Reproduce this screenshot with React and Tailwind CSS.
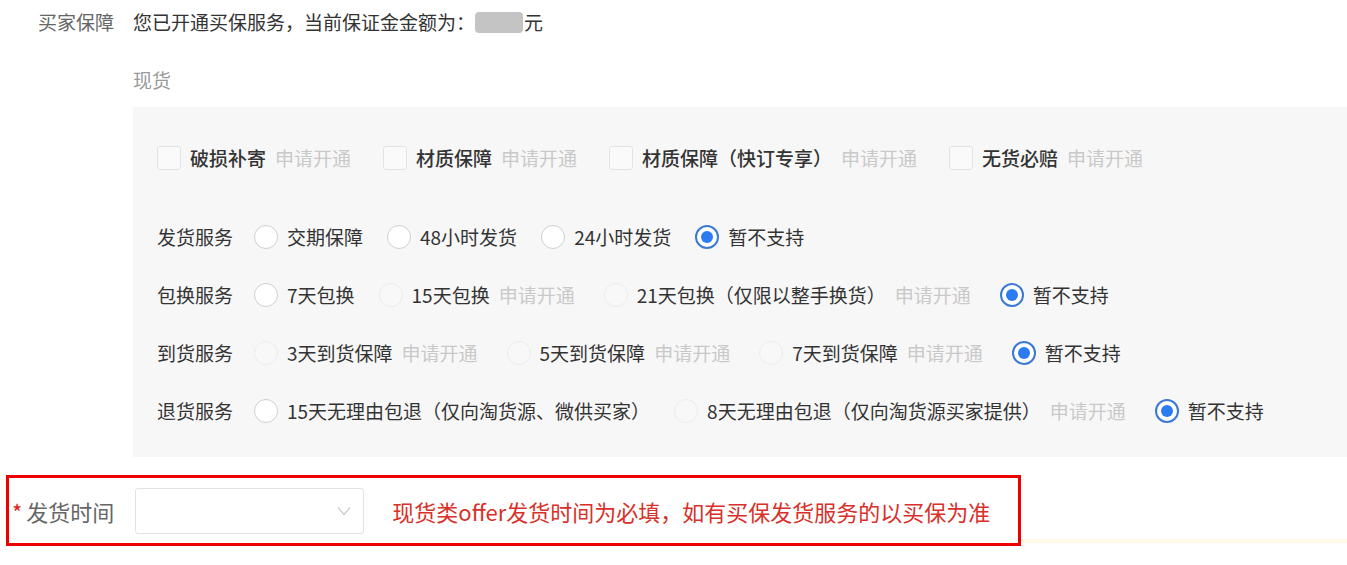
const FONT = { fontFamily: '"Noto Sans CJK SC", "Noto Sans", sans-serif' };

const deliveryRows = [
  {
    label: '发货服务',
    options: [
      { text: '交期保障' },
      { text: '48小时发货' },
      { text: '24小时发货' },
      { text: '暂不支持', checked: true },
    ],
  },
  {
    label: '包换服务',
    options: [
      { text: '7天包换' },
      { text: '15天包换', disabled: true },
      { text: '21天包换（仅限以整手换货）', disabled: true },
      { text: '暂不支持', checked: true },
    ],
  },
  {
    label: '到货服务',
    options: [
      { text: '3天到货保障', disabled: true },
      { text: '5天到货保障', disabled: true },
      { text: '7天到货保障', disabled: true },
      { text: '暂不支持', checked: true },
    ],
  },
  {
    label: '退货服务',
    options: [
      { text: '15天无理由包退（仅向淘货源、微供买家）' },
      { text: '8天无理由包退（仅向淘货源买家提供）', disabled: true },
      { text: '暂不支持', checked: true },
    ],
  },
];

const checkItems = ['破损补寄', '材质保障', '材质保障（快订专享）', '无货必赔'];

function Radio({ checked, disabled }) {
  if (checked) {
    return (
      <span className="w-6 h-6 rounded-full border-2 border-[#3b78d8] bg-white flex items-center justify-center shrink-0">
        <span className="w-[12px] h-[12px] rounded-full bg-[#2d7bf0]" />
      </span>
    );
  }
  return (
    <span
      className={`w-6 h-6 rounded-full border shrink-0 ${
        disabled ? 'border-[#ececec] bg-[#f8f8f8]' : 'border-[#cfcfcf] bg-white'
      }`}
    />
  );
}

function ApplyTag() {
  return <span className="ml-[9px] mr-[5px] text-[#c9c9c9]">申请开通</span>;
}

export default function App() {
  return (
    <div className="w-full h-[565px] bg-white overflow-hidden text-[19px] leading-6 text-[#333]" style={FONT}>
      {/* 买家保障 */}
      <div className="flex items-center pt-[10px] pl-[38px]">
        <span className="w-[95px] text-[#666]">买家保障</span>
        <span className="flex items-center">
          您已开通买保服务，当前保证金金额为：
          <span className="inline-block w-[48px] h-[21px] rounded bg-[#c4c4c4] mr-[1px]" />
          元
        </span>
      </div>

      <div className="ml-[133px] mt-[34px] text-[#999]">现货</div>

      <div className="ml-[133px] mt-[15px] h-[350px] bg-[#f7f7f7] pl-6 pt-[39px]">
        <div className="flex items-center h-6 gap-[32px]">
          {checkItems.map((t) => (
            <div key={t} className="flex items-center">
              <span className="w-6 h-6 rounded-[3px] border border-[#e3e3e3] bg-[#fafafa]" />
              <span className="ml-[9px] font-medium">{t}</span>
              <span className="ml-[9px] text-[#c9c9c9]">申请开通</span>
            </div>
          ))}
        </div>

        <div className="mt-[55px] flex flex-col gap-[34px]">
          {deliveryRows.map((row) => (
            <div key={row.label} className="flex items-center h-6">
              <span className="mr-[21px]">{row.label}</span>
              {row.options.map((o, i) => (
                <div key={i} className="flex items-center mr-6">
                  <Radio checked={o.checked} disabled={o.disabled} />
                  <span className="ml-[9px]">{o.text}</span>
                  {o.disabled && <ApplyTag />}
                </div>
              ))}
            </div>
          ))}
        </div>
      </div>

      {/* 发货时间 */}
      <div className="flex items-end mt-[18px]">
        <div className="ml-[6px] w-[1015px] h-[71px] border-[3px] border-[#ee0000] flex items-center">
          <span className="ml-[3px] text-[#e02020] text-[22px]">*</span>
          <span className="ml-[4px] text-[#666] text-[22px]">发货时间</span>
          <div className="ml-[21px] w-[229px] h-[46px] rounded-[3px] border border-[#e2e2e2] bg-white flex items-center justify-end pr-[12px]">
            <svg width="14" height="10" viewBox="0 0 14 10" fill="none">
              <path d="M1 1.5 L7 8.5 L13 1.5" stroke="#c8c8c8" strokeWidth="1.2" />
            </svg>
          </div>
          <span className="ml-[28px] text-[#d8302a] text-[22px]">
            现货类offer发货时间为必填，如有买保发货服务的以买保为准
          </span>
        </div>
        <div className="flex-1 h-[4px] mb-[3px] bg-[#fdfbe8]" />
      </div>
    </div>
  );
}
